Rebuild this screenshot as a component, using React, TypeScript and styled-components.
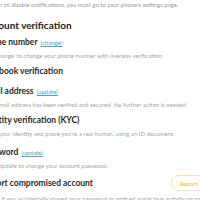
import * as React from "react"
import styled, {createGlobalStyle} from "styled-components"

const Global = createGlobalStyle`
  html, body {
    margin: 0;
    padding: 0;
    background: #ffffff;
    overflow: hidden;
  }
  body {
    font-family: Lato, "Noto Sans", sans-serif;
  }
`;

const Page = styled.div`
  width: 223px;
  margin-left: -18px;
  padding-top: 1px;
`;
const Note = styled.p`
  margin: 0;
  font-size: 6px;
  line-height: 8px;
  color: #9a9a9a;
  white-space: nowrap;
`;
const Title = styled.h2`
  margin: 10px 0 0;
  font-size: 10px;
  line-height: 13px;
  font-weight: 700;
  color: #222;
  white-space: nowrap;
`;
const Item = styled.div<{gap: number}>`
  margin-top: ${p => p.gap}px;
`;
const Row = styled.div`
  display: flex;
  align-items: center;
  justify-content: space-between;
`;
const Label = styled.h3`
  margin: 0;
  font-size: 8.5px;
  line-height: 11px;
  font-weight: 700;
  color: #2a2a2a;
  white-space: nowrap;
`;
const Link = styled.a`
  margin-left: 3px;
  font-size: 6px;
  font-weight: 400;
  color: #4aa3c4;
  text-decoration: underline;
`;
const Desc = styled.p`
  margin: 4px 0 0;
  font-size: 6px;
  line-height: 8px;
  color: #a3a3a3;
  white-space: nowrap;
`;
const Pill = styled.button`
  font-family: inherit;
  font-size: 6px;
  color: #f0b840;
  background: #fff;
  border: 1px solid #f7e2b4;
  border-radius: 9px;
  height: 16px;
  width: 34px;
  padding: 0 0 0 8px;
  text-align: left;
`;

interface Entry {
  label: string
  link?: string
  desc?: string
  gap: number
  report?: boolean
}

const entries: Entry[] = [
  {label: "Phone number", link: "(change)", desc: "Tap 'Change' to change your phone number with liveness verification.", gap: 5},
  {label: "Facebook verification", gap: 6},
  {label: "Email address", link: "(update)", desc: "Your email address has been verified and secured. No further action is needed.", gap: 9},
  {label: "Identity verification (KYC)", desc: "Verify your identity and prove you're a real human, using an ID document.", gap: 6},
  {label: "Password", link: "(update)", desc: "Press Update to change your account password.", gap: 9},
  {label: "Report compromised account", desc: "Report if you accidentally shared your password or noticed suspicious activity on your account.", gap: 5, report: true},
]

export default function App() {
  return (
    <Page>
      <Global />
      <Note>In order to disable notifications, you must go to your phone's settings page.</Note>
      <Title>Account verification</Title>
      {entries.map(e => (
        <Item key={e.label} gap={e.gap}>
          <Row>
            <Label>
              {e.label}
              {e.link && <Link>{e.link}</Link>}
            </Label>
            {e.report && <Pill>Report</Pill>}
          </Row>
          {e.desc && <Desc>{e.desc}</Desc>}
        </Item>
      ))}
    </Page>
  )
}
